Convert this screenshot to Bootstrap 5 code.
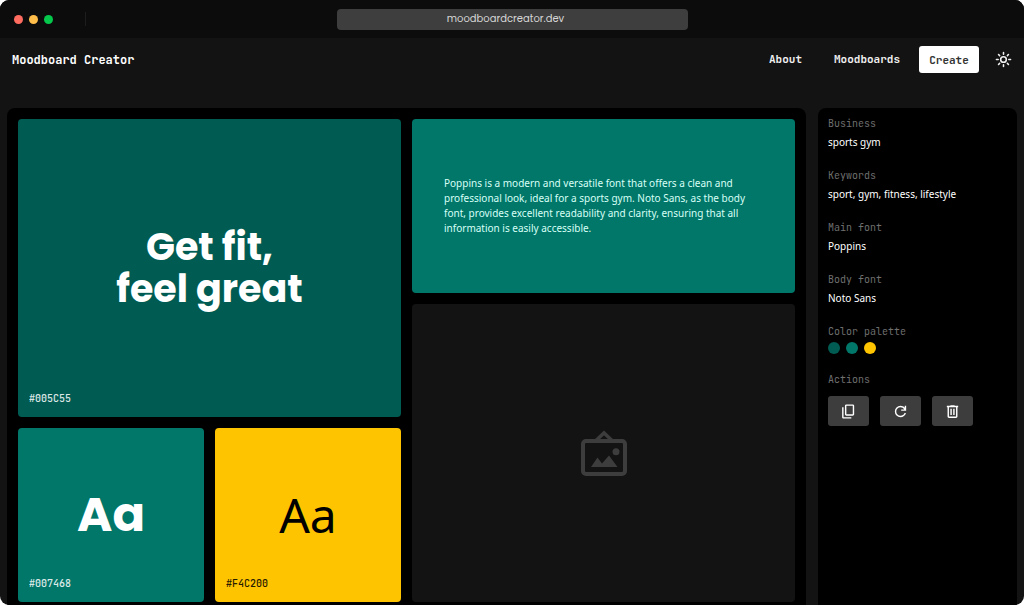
<!DOCTYPE html>
<html lang="en" data-bs-theme="dark">
<head>
<meta charset="utf-8">
<meta name="viewport" content="width=device-width, initial-scale=1">
<title>Moodboard Creator</title>
<link href="https://cdn.jsdelivr.net/npm/bootstrap@5.3.0/dist/css/bootstrap.min.css" rel="stylesheet">
<style>
  :root { --gap: 11px; --mono: "JetBrains Mono", "DejaVu Sans Mono", monospace; --sans: "Noto Sans", sans-serif; --display: "Poppins", "Inter", sans-serif; }
  body { background: #fff; font-family: var(--sans); font-size: 11px; color: #fff; }
  .app-window { background: #131313; border-radius: 9px; overflow: hidden; }
  .title-bar { background: #0c0c0c; height: 38px; padding: 0 14px; display: grid; grid-template-columns: 1fr 351px 1fr; align-items: center; }
  .lights { gap: 6px; }
  .light { width: 9px; height: 9px; border-radius: 50%; }
  .light.close-light { background: #ff6c60; }
  .light.min-light { background: #ffbd4a; }
  .light.max-light { background: #05c74c; }
  .bar-rule { width: 1px; height: 14px; background: #1d1d1d; margin-left: 32px; }
  .address { background: #3e3e3e; color: #d6d6d6; border: 0; border-radius: 4px; height: 21px; font-family: var(--display); font-size: 10px; text-align: center; padding: 0 13px 0 0; }
  .top-nav { padding: 8px 12px; margin-bottom: 27px; font-family: var(--mono); font-weight: 600; }
  .site-name { font-size: 12px; font-weight: 700; color: #fff; text-decoration: none; }
  .nav-item-link { font-size: 11px; color: #f0f0f0; text-decoration: none; margin-right: 32px; }
  .nav-item-link.last { margin-right: 19px; }
  .create-btn { background: #fff; color: #333; border: 0; border-radius: 3px; width: 60px; height: 27px; font: 600 11px var(--mono); }
  .create-btn, .icon-btn { padding: 0; }
  .icon-btn { background: none; border: 0; color: #f0f0f0; line-height: 0; margin-left: 16px; }
  .main-area { padding: 0 7px; gap: 12px; }
  .panel { background: #000; border-radius: 8px 8px 0 0; }
  .board { padding: var(--gap) var(--gap) 3px; gap: var(--gap); min-width: 0; }
  .board-col { flex: 1 1 0; min-width: 0; gap: var(--gap); }
  .tile { border-radius: 4px; position: relative; display: flex; align-items: center; justify-content: center; min-width: 0; }
  .tall { flex: 298 0 298px; }
  .short { flex: 174 0 174px; }
  .deep { background: #005c53; }
  .teal { background: #007769; }
  .gold { background: #ffc400; color: #000; }
  .blank { background: #131313; color: #3d3d3d; }
  .slogan { font: 700 38px/42px var(--display); text-align: center; margin: 0; }
  .sample { font-size: 48px; line-height: 56px; }
  .sample.display-face { font-family: var(--display); font-weight: 700; }
  .hex { position: absolute; left: 11px; bottom: 10px; font: 500 10px/16px var(--mono); opacity: .85; }
  .blurb { font-size: 10px; line-height: 15px; padding: 0 32px; margin: 0; color: #d9fff6; }
  .details { width: 199px; flex: none; padding: 8px 10px; }
  .details dl { margin: 0; }
  .details dt { font: 10px/16px var(--mono); color: #6f6f6f; }
  .details dd { font-size: 10px; line-height: 20px; margin: 0 0 16px; }
  .details dd.swatches { height: 16px; gap: 6px; }
  .swatch { width: 12px; height: 12px; border-radius: 50%; }
  .actions { gap: var(--gap); }
  .action-btn { width: 41px; height: 30px; padding: 0; border: 0; border-radius: 3px; background: #3d3d3d; color: #fff; line-height: 0; }
</style>
</head>
<body>
<div class="app-window min-vh-100 d-flex flex-column">
  <div class="title-bar">
    <div class="d-flex align-items-center">
      <div class="lights d-flex">
        <span class="light close-light"></span>
        <span class="light min-light"></span>
        <span class="light max-light"></span>
      </div>
      <span class="bar-rule"></span>
    </div>
    <input class="address w-100" type="text" value="moodboardcreator.dev" aria-label="Address">
  </div>

  <nav class="top-nav d-flex align-items-center" aria-label="Main">
    <a class="site-name me-auto" href="#">Moodboard Creator</a>
    <a class="nav-item-link" href="#">About</a>
    <a class="nav-item-link last" href="#">Moodboards</a>
    <button class="create-btn" type="button">Create</button>
    <button class="icon-btn" type="button" aria-label="Toggle theme">
      <svg width="17" height="17" viewBox="0 0 24 24" fill="none" stroke="currentColor" stroke-width="2.2" stroke-linecap="round"><circle cx="12" cy="12" r="4"/><path d="M12 2v2.500M12 19.500V22M2 12h2.500M19.500 12H22M5 5l1.500 1.500M17.500 17.500 19 19M5 19l1.500-1.500M17.500 6.500 19 5"/></svg>
    </button>
  </nav>

  <main class="main-area d-flex flex-grow-1">
    <section class="panel board d-flex flex-grow-1">
      <div class="board-col d-flex flex-column">
        <div class="tile tall deep">
          <h1 class="slogan">Get fit,<br>feel great</h1>
          <span class="hex">#005C55</span>
        </div>
        <div class="short board-col d-flex">
          <div class="tile teal flex-fill w-50"><span class="sample display-face">Aa</span><span class="hex">#007468</span></div>
          <div class="tile gold flex-fill w-50"><span class="sample">Aa</span><span class="hex">#F4C200</span></div>
        </div>
      </div>
      <div class="board-col d-flex flex-column">
        <div class="tile short teal">
          <p class="blurb">Poppins is a modern and versatile font that offers a clean and professional look, ideal for a sports gym. Noto Sans, as the body font, provides excellent readability and clarity, ensuring that all information is easily accessible.</p>
        </div>
        <div class="tile tall blank">
          <svg width="46" height="46" viewBox="0 0 46 46" fill="none" stroke="currentColor" stroke-width="4" role="img" aria-label="Image placeholder"><rect x="2" y="11" width="42" height="33" rx="3"/><path d="M15 10.500 23 3l8 7.500" stroke-width="3.500"/><circle cx="35" cy="21.700" r="3.500" fill="currentColor" stroke="none"/><path d="M10 37l6.500-9.500 4.500 6 7-8L36.500 37z" fill="currentColor" stroke="none"/></svg>
        </div>
      </div>
    </section>

    <aside class="panel details">
      <dl>
        <dt>Business</dt><dd>sports gym</dd>
        <dt>Keywords</dt><dd>sport, gym, fitness, lifestyle</dd>
        <dt>Main font</dt><dd>Poppins</dd>
        <dt>Body font</dt><dd>Noto Sans</dd>
        <dt>Color palette</dt>
        <dd class="swatches d-flex align-items-center"><span class="swatch deep"></span><span class="swatch teal"></span><span class="swatch gold"></span></dd>
        <dt>Actions</dt>
        <dd class="actions d-flex mt-2">
          <button class="action-btn" type="button" aria-label="Copy"><svg width="17" height="17" viewBox="0 0 24 24" fill="currentColor"><path d="M9 18q-.8 0-1.400-.6T7 16V4q0-.8.6-1.400T9 2h9q.8 0 1.400.6T20 4v12q0 .8-.6 1.400T18 18H9zm0-2h9V4H9v12zm-4 6q-.8 0-1.400-.6T3 20V6h2v14h11v2H5z"/></svg></button>
          <button class="action-btn" type="button" aria-label="Regenerate"><svg width="17" height="17" viewBox="0 0 24 24" fill="currentColor"><path d="M12 20q-3.350 0-5.675-2.325T4 12q0-3.350 2.325-5.675T12 4q1.725 0 3.300.7T18 6.750V4h2v7h-7V9h4.200q-.8-1.400-2.200-2.200T12 6Q9.500 6 7.750 7.750T6 12q0 2.500 1.750 4.250T12 18q1.925 0 3.475-1.100T17.650 14h2.100q-.7 2.650-2.850 4.325T12 20z"/></svg></button>
          <button class="action-btn" type="button" aria-label="Delete"><svg width="17" height="17" viewBox="0 0 24 24" fill="currentColor"><path d="M7 21q-.8 0-1.400-.6T5 19V6H4V4h5V3h6v1h5v2h-1v13q0 .8-.6 1.400T17 21H7zM17 6H7v13h10V6zM9 17h2V8H9v9zm4 0h2V8h-2v9z"/></svg></button>
        </dd>
      </dl>
    </aside>
  </main>
</div>
<script src="https://cdn.jsdelivr.net/npm/bootstrap@5.3.0/dist/js/bootstrap.bundle.min.js"></script>
</body>
</html>
